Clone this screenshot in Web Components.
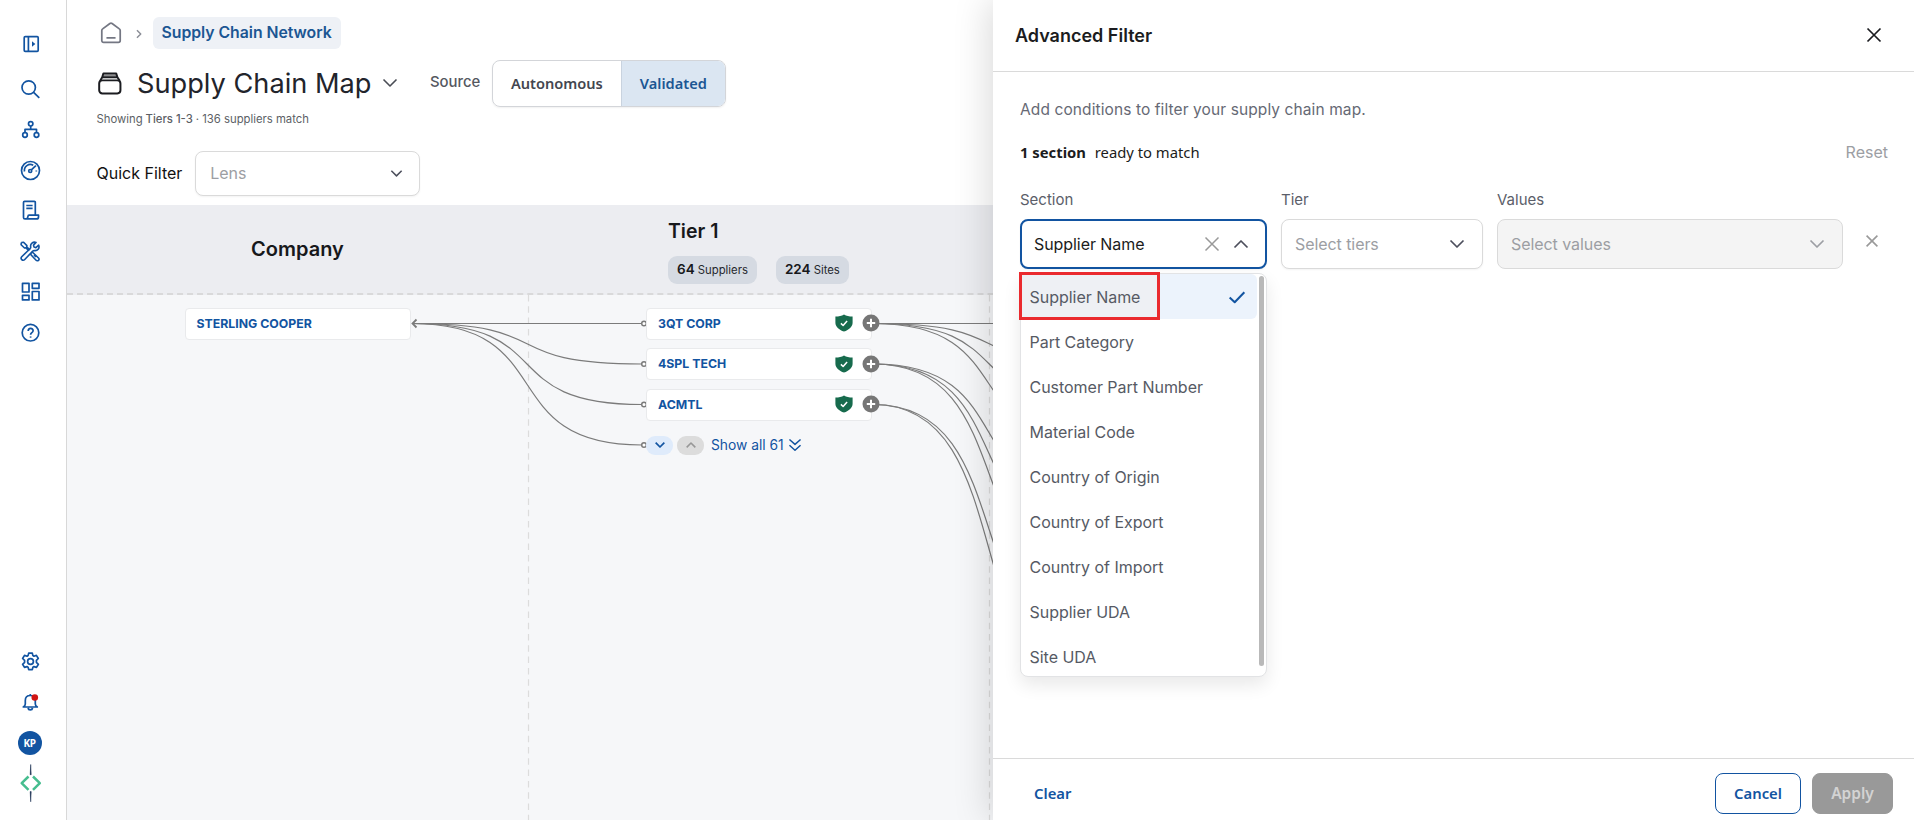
<!DOCTYPE html>
<html lang="en">
<head>
  <meta charset="UTF-8">
  <meta name="viewport" content="width=device-width, initial-scale=1.0">
  <title>Supply Chain Map</title>
  <style>
    body {
      margin: 0;
      height: 100vh;
      display: flex;
      overflow: hidden;
      font-family: Inter, sans-serif;
      font-size: 16px;
      color: #1b1c20;
      background: #ffffff;
    }
  </style>
</head>
<body>
  <side-bar></side-bar>
  <map-page></map-page>
  <filter-panel heading="Advanced Filter"></filter-panel>

  <script type="text/javascript">
    // every icon is drawn in its own viewBox, stroke follows the text colour
    const icons = {
      expand: '<svg viewBox="0 0 24 24"><rect x="6.200" y="4.700" width="14" height="14.600" rx="1"/><path d="M10.400 5v14"/><path d="M14 9.300v5.400l3.300-2.700z" fill="currentColor" stroke="none"/></svg>',
      search: '<svg viewBox="0 0 24 24"><circle cx="10.700" cy="10.500" r="6.700"/><path d="M15.600 15.400l5.700 5.500"/></svg>',
      network: '<svg viewBox="0 0 24 24"><circle cx="12.700" cy="6.800" r="2.200"/><circle cx="7" cy="18" r="2.300"/><circle cx="18.500" cy="18" r="2.300"/><path d="M12.700 9v3.300M7 15.700v-3.400h11.500v3.400"/></svg>',
      gauge: '<svg viewBox="0 0 24 24"><circle cx="12.500" cy="12.500" r="9"/><path d="M6.500 13.500a5.900 5.900 0 0 1 8.700-6.200M18.300 12.500v1"/><circle cx="12.200" cy="13" r="1.500"/><path d="M13.300 11.900l4.600-4.300"/></svg>',
      report: '<svg viewBox="0 0 24 24"><path d="M17.300 16.500V4.400c0-.7-.4-1-1-1H6.600c-.7 0-1.100.4-1.100 1v15c0 .9.600 1.500 1.500 1.500h11.500c1.200 0 2-.9 2-2v-1.800H11c-.6 0-1 .5-1 1.200 0 1.500-.7 2.300-1.700 2.600"/><path d="M8.300 7.500h6.300M8.300 10.300h6.300"/></svg>',
      tools: '<svg viewBox="0 0 24 24"><path d="M3.300 3.500l2.300-.3 3.300 3.400-.2 1.200 3.300 3.200M13.300 13.500l1.500 0 5.700 5.500a1.500 1.500 0 0 1-2.400 2.300l-5.200-5.500.2-1.500M3.300 3.500l-.2 2.200L6.500 9l1.300-.2 3 3M16 16l2 2"/><path d="M20.700 6.200l-2.800 2.500-1.900-.6-.5-2L18 3.400c-3-1-6 1.300-5.300 4.600.1.600 0 1-.5 1.500l-8.500 8.300c-1.700 1.800 1 4.700 2.800 2.900l8.300-8.600c.5-.5 1-.6 1.600-.5 3.200.5 5.500-2.400 4.300-5.400z"/></svg>',
      dashboard: '<svg viewBox="0 0 24 24"><rect x="4.500" y="4.300" width="6.500" height="8.700"/><rect x="4.500" y="16.300" width="6.500" height="4.600"/><rect x="14.300" y="4.300" width="6.700" height="5"/><rect x="14.300" y="12.500" width="6.700" height="8.400"/></svg>',
      help: '<svg viewBox="0 0 24 24"><circle cx="12.500" cy="12.700" r="8.300"/><path d="M10.200 10.900c0-3.200 4.900-3.300 4.900-.2 0 2-2.500 2-2.500 4"/><path d="M12.600 16.400v1.300"/></svg>',
      gear: '<svg viewBox="0 0 24 24"><circle cx="12.500" cy="11.500" r="2.900"/><path d="M10.700 3.100h3.600l.6 2.500 1 .6 2.500-.8 1.900 3.100-1.900 1.900v1.900l2 2-1.900 3.100-2.600-.8-1 .6-.6 2.400h-3.600l-.6-2.400-1.100-.6-2.500.8-1.900-3.100 2-2v-1.900l-2-1.900 1.900-3.100 2.600.8 1-.6z"/></svg>',
      bell: '<svg viewBox="0 0 24 24"><path d="M5.300 17h14c-1.300-.8-2-1.600-2-3v-3.500c0-3-2-5-5-5s-5 2-5 5V14c0 1.400-.7 2.200-2 3zM10 18c.4 2.400 4.200 2.400 4.600 0M12.300 4v1.500"/><circle cx="16.800" cy="7.500" r="3.300" fill="#d01414" stroke="none"/></svg>',
      logo: '<svg viewBox="0 0 24 40"><path d="M12.700 1.500l.5 10.200h-1zM12.700 38.800l.5-10.200h-1z" fill="#0c2246" stroke="#0c2246" stroke-width=".5"/><path d="M10.500 13.500l-6.800 6.700 6.800 6.700M15 13.500l6.800 6.700-6.800 6.700" stroke="#46bd8f" stroke-width="2.500"/></svg>',
      home: '<svg viewBox="0 0 24 24"><path d="M3.500 9.800c0-.7.200-1.200.8-1.600l6.700-5c.6-.4 1.400-.4 2 0l6.700 5c.6.400.8.900.8 1.600v9.200c0 1-.7 1.700-1.700 1.700H5.200c-1 0-1.700-.7-1.700-1.700z"/><path d="M7.800 16.500h8.400"/></svg>',
      stack: '<svg viewBox="0 0 24 24"><rect x="2.100" y="9" width="20.400" height="12.500" rx="3"/><path d="M2.900 9.500L5 6h14.600l2.200 3.500M5 6l1.200-3.700h12.200L19.600 6"/><path d="M6.300 4.300h12" stroke-opacity=".5"/></svg>',
      down: '<svg viewBox="0 0 24 24"><path d="M5.500 8.500l6.500 6.500 6.500-6.500"/></svg>',
      up: '<svg viewBox="0 0 24 24"><path d="M5.500 15.500L12 9l6.500 6.500"/></svg>',
      next: '<svg viewBox="0 0 24 24"><path d="M8.500 5.500l6.500 6.500-6.500 6.500"/></svg>',
      close: '<svg viewBox="0 0 24 24"><path d="M5.500 5.500l13 13M18.500 5.500l-13 13"/></svg>',
      check: '<svg viewBox="0 0 24 24"><path d="M4 12.500l5.500 5.200L20 6.800"/></svg>',
      double: '<svg viewBox="0 0 24 24"><path d="M2.500 2.500l9.500 8.500 9.500-8.500M2.500 12.500L12 21l9.500-8.500"/></svg>',
      shield: '<svg viewBox="0 0 18 18"><path d="M9 .4c2.400 1.500 5 2.100 8.600 2.100v6.200c0 4-3.600 7-8.600 8.900C4 15.700.4 12.700.4 8.700V2.500C4 2.500 6.600 1.900 9 .4z" fill="#176b4d" stroke="none"/><path d="M5.900 9.400l2.200 2.100 4-4.600" stroke="#fff"/></svg>',
      plus: '<svg viewBox="0 0 18 18"><circle cx="9" cy="9" r="8.500" fill="#767676" stroke="none"/><path d="M9 4.800v8.400M4.800 9h8.400" stroke="#fff"/></svg>'
    };

    // attaches the shadow root that all the elements below share
    class BaseElement extends HTMLElement {
      constructor() {
        super();
        this._shadowRoot = this.attachShadow({ mode: 'open' });
      }

      connectedCallback() {
        this._shadowRoot.innerHTML = this.template();
      }
    }

    class UiIcon extends BaseElement {
      template() {
        const size = this.getAttribute('size') || 24;
        const height = this.getAttribute('height') || size;
        return `
          <style>
            :host { display: block; flex: none; width: ${size}px; height: ${height}px; }
            svg {
              display: block; width: 100%; height: 100%;
              fill: none; stroke: currentColor;
              stroke-width: ${this.getAttribute('weight') || 1.7};
              stroke-linejoin: round;
            }
          </style>
          ${icons[this.getAttribute('name')]}
        `;
      }
    }

    class SideBar extends BaseElement {
      template() {
        return `
          <style>
            :host {
              display: flex; flex-direction: column; justify-content: space-between; align-items: center;
              box-sizing: border-box; flex: none;
              width: 67px; padding: 32px 7px 17px 0;
              border-right: 1px solid #d8d8d8;
              color: #1254a1;
            }
            nav { display: flex; flex-direction: column; align-items: center; gap: 16.5px; }
            nav.top ui-icon:first-child { margin-bottom: 4px; }
            .avatar {
              display: flex; align-items: center; justify-content: center;
              width: 24px; height: 24px; border-radius: 50%;
              background: #1254a1; color: #fff;
              font: 700 10px "Noto Sans", sans-serif; letter-spacing: -0.5px;
            }
            nav.bottom ui-icon:last-child { margin-top: -8px; }
          </style>
          <nav class="top">
            <ui-icon name="expand"></ui-icon>
            <ui-icon name="search"></ui-icon>
            <ui-icon name="network"></ui-icon>
            <ui-icon name="gauge"></ui-icon>
            <ui-icon name="report"></ui-icon>
            <ui-icon name="tools" weight="1.600"></ui-icon>
            <ui-icon name="dashboard"></ui-icon>
            <ui-icon name="help"></ui-icon>
          </nav>
          <nav class="bottom">
            <ui-icon name="gear"></ui-icon>
            <ui-icon name="bell"></ui-icon>
            <span class="avatar">KP</span>
            <ui-icon name="logo" height="40"></ui-icon>
          </nav>
        `;
      }
    }

    // a closed or open combo box; size and colours come from attributes
    class SelectBox extends BaseElement {
      template() {
        const small = this.hasAttribute('small');
        const open = this.hasAttribute('open');
        return `
          <style>
            :host {
              display: flex; align-items: center; gap: 5px;
              box-sizing: border-box; height: 50px; padding: 0 13px 0 13px;
              border: 1px solid #dadada; border-radius: 8px;
              background: #fff; color: #9c9ea3;
              box-shadow: 0 1px 2px rgba(0, 0, 0, 0.05);
            }
            :host([open]) { border: 2px solid #1254a1; padding: 0 12px 0 12px; color: #1b1c20; }
            :host([disabled]) { background: #f4f4f4; box-shadow: none; }
            :host([small]) { height: 45px; padding: 0 13px 0 14px; }
            span { flex: 1; white-space: nowrap; letter-spacing: -0.070px; }
            :host([small]) span { margin-top: -2px; }
            .arrow { color: #4c4f5c; }
            .clear { color: #999; }
            :host([disabled]) .arrow { color: #9c9ea3; }
          </style>
          <span><slot></slot></span>
          ${open ? '<ui-icon class="clear" name="close" size="24" weight="1.500"></ui-icon>' : ''}
          <ui-icon class="arrow" name="${open ? 'up' : 'down'}" size="${small ? 19 : 24}" weight="${small ? 1.9 : 1.7}"></ui-icon>
        `;
      }
    }

    class PageHeader extends BaseElement {
      template() {
        return `
          <style>
            :host { display: block; box-sizing: border-box; height: 205px; padding: 17px 0 0 29.500px; }
            div { display: flex; align-items: center; white-space: nowrap; }
            .crumbs { height: 32px; color: #747783; }
            .crumbs ui-icon:first-child { margin-left: 1px; }
            .crumbs ui-icon + ui-icon { margin: 1px 7px 0 8.500px; color: #8b8e97; }
            .crumbs a {
              padding: 0 9px; line-height: 32px; border-radius: 6px;
              background: #eef1f6; color: #1b5693; font-weight: 600;
              font-size: 15.800px; letter-spacing: -0.030px;
              margin-left: -0.500px;
            }
            .title { height: 48px; margin-top: 10px; }
            h1 { margin: 1px 7px 0 15.500px; font-size: 27.200px; font-weight: 400; line-height: 40px; color: #22242b; }
            .title > ui-icon:first-child { color: #1b1c20; }
            .title > ui-icon { color: #4a4d55; }
            .source { margin: -3px 11.500px 0 27.500px; font-size: 14.900px; font-weight: 500; color: #55585f; }
            .group {
              box-sizing: border-box; height: 47px; overflow: hidden;
              border: 1px solid #d3d5d9; border-radius: 8px;
              box-shadow: 0 1px 2px rgba(0, 0, 0, 0.06);
              font-family: "Noto Sans", sans-serif; font-weight: 600; font-size: 14.600px;
              color: #43464f;
            }
            .group span { box-sizing: border-box; line-height: 46px; text-align: center; width: 128px; }
            .group .on { width: 104px; background: #dbe6f2; color: #1b5693; border-left: 1px solid #c9d3df; }
            .info { margin-top: 5px; height: 14px; font-size: 11.300px; color: #5c5f66; }
            .info b { font-weight: 500; margin: 0 3px; }
            .filter { margin-top: 25px; height: 45px; color: #111; }
            .filter span { margin-top: -2px; }
            .filter select-box { width: 225px; margin-left: 13px; }
          </style>
          <div class="crumbs">
            <ui-icon name="home" size="26" weight="1.600"></ui-icon>
            <ui-icon name="next" size="14" weight="2.500"></ui-icon>
            <a>Supply Chain Network</a>
          </div>
          <div class="title">
            <ui-icon name="stack" size="25" weight="1.900"></ui-icon>
            <h1>Supply Chain Map</h1>
            <ui-icon name="down" size="24" weight="1.600"></ui-icon>
            <span class="source">Source</span>
            <div class="group"><span>Autonomous</span><span class="on">Validated</span></div>
          </div>
          <div class="info">Showing <b>Tiers 1-3</b> · 136 suppliers match</div>
          <div class="filter">
            <span>Quick Filter</span>
            <select-box small>Lens</select-box>
          </div>
        `;
      }
    }

    class CountPill extends BaseElement {
      template() {
        return `
          <style>
            :host {
              display: block; padding: 0 9px; border-radius: 9px;
              line-height: 27px; font-size: 11.300px; white-space: nowrap;
              background: #d5dae2; color: #25272d;
            }
            b { font-size: 13.500px; font-weight: 600; color: #17181b; }
          </style>
          <b>${this.getAttribute('count')}</b> <slot></slot>
        `;
      }
    }

    class SupplierCard extends BaseElement {
      template() {
        return `
          <style>
            :host {
              display: flex; align-items: center; justify-content: space-between;
              box-sizing: border-box; width: 226px; height: 32px; padding: 0 0 1px 11px;
              border: 1px solid #e9eaec; border-radius: 4px;
              background: #fff; color: #1254a1;
              font-size: 12.300px; font-weight: 700;
            }
            .marks { display: flex; align-items: center; gap: 9px; margin-right: -8.500px; }
          </style>
          <slot></slot>
          ${this.hasAttribute('verified') ? `
            <div class="marks">
              <ui-icon name="shield" size="18" weight="1.500"></ui-icon>
              <ui-icon name="plus" size="18" weight="2"></ui-icon>
            </div>` : ''}
        `;
      }
    }

    // draws the links between the tiers and the column separators
    class LinkLayer extends BaseElement {
      template() {
        const curve = (x1, y1, x2, y2) => {
          const pull = (x2 - x1) * 0.65;
          return `<path d="M${x1} ${y1}C${x1 + pull} ${y1} ${x2 - pull} ${y2} ${x2} ${y2}"/>`;
        };
        const rows = [28.5, 69, 109.5, 150];
        const links = [
          [28.5, [28.5, 69, 109.5, 150]],
          [69, [207, 249, 289]],
          [109.5, [360, 400]]
        ];
        return `
          <style>
            :host { display: block; position: absolute; inset: 0; }
            svg { display: block; width: 100%; height: 100%; fill: none; stroke: #7b7b7b; stroke-width: 1.200; }
            .separator { stroke: #dcdcdc; stroke-dasharray: 6.500 4.800; }
          </style>
          <svg>
            <path class="separator" d="M461.500 0V530M922.500 0V530"/>
            ${rows.map(y => curve(345, 28.5, 575, y)).join('')}
            <path d="M349.500 24.500l-4 4 4 4" stroke-width="1.800"/>
            ${rows.map(y => `<circle cx="577" cy="${y}" r="2.300" fill="#fff" stroke-width="1.500"/>`).join('')}
            ${links.map(([from, targets]) => targets.map(to => curve(806.5, from, 1038, to)).join('')).join('')}
          </svg>
        `;
      }
    }

    class SupplierMap extends BaseElement {
      template() {
        return `
          <style>
            :host { display: flex; flex-direction: column; flex: 1; background: #f6f7f9; }
            header, .canvas { display: grid; grid-template-columns: 461px 461px 1fr; }
            header {
              box-sizing: border-box; height: 90px;
              background: #ecedf1; border-bottom: 2px dashed #d9d9da;
            }
            h2 { margin: 0; font-size: 20px; line-height: 24px; font-weight: 600; color: #17181b; }
            .company { align-self: center; text-align: center; margin-top: -1px; }
            .tier { padding: 14px 0 0 140px; }
            .tier h2 { font-size: 19.500px; }
            .pills { display: flex; gap: 19px; margin-top: 13px; }
            .canvas { position: relative; flex: 1; align-items: start; }
            .column { display: grid; gap: 8.500px; padding: 12.500px 0 0 117.500px; position: relative; }
            .column + .column { padding-left: 118px; }
            .more { display: flex; align-items: center; height: 32px; gap: 4px; font-size: 13.800px; color: #1254a1; }
            .step { display: grid; place-items: center; width: 27px; height: 19px; border-radius: 9px; background: #dfebfb; }
            .step.off { background: #dcdcdc; color: #979797; }
            .more span { margin: 0 0 0 3px; }
          </style>
          <header>
            <h2 class="company">Company</h2>
            <div class="tier">
              <h2>Tier 1</h2>
              <div class="pills">
                <count-pill count="64">Suppliers</count-pill>
                <count-pill count="224">Sites</count-pill>
              </div>
            </div>
          </header>
          <div class="canvas">
            <link-layer></link-layer>
            <div class="column"><supplier-card>STERLING COOPER</supplier-card></div>
            <div class="column">
              <supplier-card verified>3QT CORP</supplier-card>
              <supplier-card verified>4SPL TECH</supplier-card>
              <supplier-card verified>ACMTL</supplier-card>
              <div class="more">
                <div class="step"><ui-icon name="down" size="16" weight="2.600"></ui-icon></div>
                <div class="step off"><ui-icon name="up" size="16" weight="2.400"></ui-icon></div>
                <span>Show all 61</span>
                <ui-icon name="double" size="14" weight="2.600"></ui-icon>
              </div>
            </div>
          </div>
        `;
      }
    }

    class MapPage extends BaseElement {
      template() {
        return `
          <style>
            :host { display: flex; flex-direction: column; flex: 1; min-width: 0; }
          </style>
          <page-header></page-header>
          <supplier-map></supplier-map>
        `;
      }
    }

    class OptionList extends BaseElement {
      template() {
        const options = this.getAttribute('options').split(',');
        return `
          <style>
            :host {
              display: block; position: absolute; top: 54px; left: 0; right: 0;
              box-sizing: border-box; height: 404px; padding: 0 9px 0 0;
              border: 1px solid #e2e3e5; border-radius: 8px;
              background: #fff; color: #565a64;
              box-shadow: 0 8px 18px rgba(0, 0, 0, 0.09);
            }
            .option {
              display: flex; align-items: center; justify-content: space-between;
              box-sizing: border-box; height: 45px; padding: 0 9px 0 8.500px;
              letter-spacing: -0.030px;
            }
            .option.selected {
              background: linear-gradient(#eef0f4, #eef0f4) 0 0 / 138px 100% no-repeat #ecf3fc;
              border-radius: 6px;
            }
            .option ui-icon { color: #1254a1; }
            /* callout frame over the first option */
            .frame {
              position: absolute; left: -2px; top: -2px; box-sizing: border-box;
              width: 141px; height: 48px; border: 3px solid #ea2a2e;
            }
            .bar { position: absolute; right: 2px; top: 2px; width: 5px; height: 390px; border-radius: 3px; background: #b9b9b9; }
          </style>
          ${options.map((option, i) => `
            <div class="option ${i === 0 ? 'selected' : ''}">
              ${option}
              ${i === 0 ? '<ui-icon name="check" size="22" weight="2.200"></ui-icon>' : ''}
            </div>`).join('')}
          <div class="frame"></div>
          <div class="bar"></div>
        `;
      }
    }

    class FilterPanel extends BaseElement {
      template() {
        return `
          <style>
            :host {
              display: flex; flex-direction: column;
              position: absolute; top: 0; right: 0; bottom: 0; width: 921px;
              background: #fff;
              box-shadow: -4px 0 34px rgba(0, 0, 0, 0.15);
            }
            header {
              display: flex; align-items: center; justify-content: space-between;
              box-sizing: border-box; height: 72px; padding: 0 28px 1px 22px;
              border-bottom: 1px solid #dadada;
            }
            h3 { margin: 0; font-size: 18px; font-weight: 600; }
            main { flex: 1; padding: 26px 26px 0 27px; }
            p { margin: 0; line-height: 24px; color: #666974; font-size: 15.500px; letter-spacing: 0.100px; }
            .status { display: flex; justify-content: space-between; margin-top: 18px; line-height: 24px; }
            .status span { font: 14.800px/24px "Noto Sans", sans-serif; }
            .status b { margin-right: 5px; font-weight: 700; }
            .status a { color: #9c9ea3; }
            .row { display: grid; grid-template-columns: 247px 202px 346px 58px; column-gap: 14px; margin-top: 26px; }
            label { display: block; height: 29px; line-height: 20px; font-size: 15px; color: #5b5e69; }
            .field { position: relative; }
            .remove { color: #999; margin: 41px 0 0 5px; }
            footer {
              display: flex; align-items: center;
              box-sizing: border-box; height: 62px; padding: 7px 21px 0 41px;
              border-top: 1px solid #dadada;
              font: 600 14.800px "Noto Sans", sans-serif; color: #1254a1;
            }
            button {
              box-sizing: border-box; height: 41px; width: 86px; padding: 0;
              border: 1px solid #1254a1; border-radius: 8px;
              background: #fff; color: inherit; font: inherit;
            }
            .cancel { margin: 0 11px 0 auto; }
            .apply { width: 81px; border-color: #999; background: #999; color: #d3d3d3; font-size: 15.500px; }
          </style>
          <header>
            <h3>${this.getAttribute('heading')}</h3>
            <ui-icon name="close" size="24" weight="1.700"></ui-icon>
          </header>
          <main>
            <p>Add conditions to filter your supply chain map.</p>
            <div class="status">
              <span><b>1 section</b> ready to match</span>
              <a>Reset</a>
            </div>
            <div class="row">
              <div class="field">
                <label>Section</label>
                <div class="field">
                  <select-box open>Supplier Name</select-box>
                  <option-list options="Supplier Name,Part Category,Customer Part Number,Material Code,Country of Origin,Country of Export,Country of Import,Supplier UDA,Site UDA"></option-list>
                </div>
              </div>
              <div class="field"><label>Tier</label><select-box>Select tiers</select-box></div>
              <div class="field"><label>Values</label><select-box disabled>Select values</select-box></div>
              <ui-icon class="remove" name="close" size="20" weight="1.900"></ui-icon>
            </div>
          </main>
          <footer>
            <a>Clear</a>
            <button class="cancel">Cancel</button>
            <button class="apply">Apply</button>
          </footer>
        `;
      }
    }

    window.customElements.define('ui-icon', UiIcon);
    window.customElements.define('side-bar', SideBar);
    window.customElements.define('select-box', SelectBox);
    window.customElements.define('page-header', PageHeader);
    window.customElements.define('count-pill', CountPill);
    window.customElements.define('supplier-card', SupplierCard);
    window.customElements.define('link-layer', LinkLayer);
    window.customElements.define('supplier-map', SupplierMap);
    window.customElements.define('map-page', MapPage);
    window.customElements.define('option-list', OptionList);
    window.customElements.define('filter-panel', FilterPanel);
  </script>
</body>
</html>
